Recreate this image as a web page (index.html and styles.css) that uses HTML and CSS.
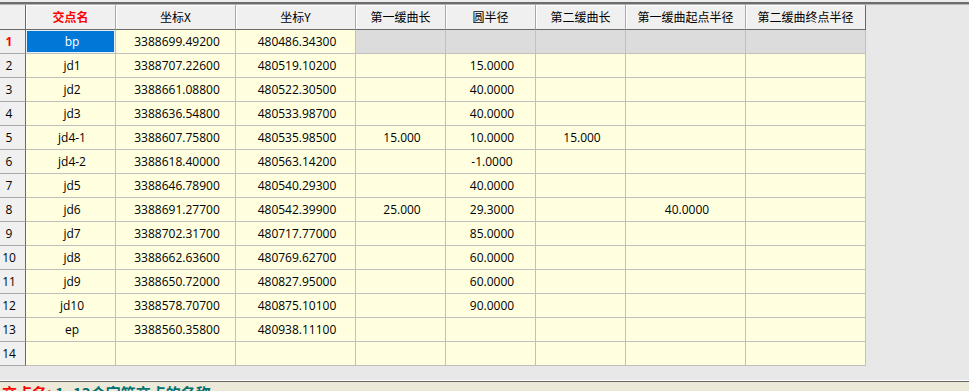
FILE: index.html
```html
<!DOCTYPE html>
<html lang="zh-CN">
<head>
<meta charset="utf-8">
<title>交点表</title>
<link rel="stylesheet" href="styles.css">
</head>
<body>
<div class="topbar"></div>
<div class="area">
  <div class="grid">
    <div class="row head">
      <div class="corner"></div>
      <div class="hc key">交点名</div>
      <div class="hc">坐标X</div>
      <div class="hc">坐标Y</div>
      <div class="hc">第一缓曲长</div>
      <div class="hc">圆半径</div>
      <div class="hc">第二缓曲长</div>
      <div class="hc">第一缓曲起点半径</div>
      <div class="hc last">第二缓曲终点半径</div>
    </div>
    <div class="row">
      <div class="rh cur">1</div>
      <div class="c sel">bp</div>
      <div class="c">3388699.49200</div>
      <div class="c">480486.34300</div>
      <div class="c ro"></div><div class="c ro"></div><div class="c ro"></div><div class="c ro"></div><div class="c ro"></div>
    </div>
    <div class="row">
      <div class="rh">2</div><div class="c">jd1</div><div class="c">3388707.22600</div><div class="c">480519.10200</div>
      <div class="c"></div><div class="c">15.0000</div><div class="c"></div><div class="c"></div><div class="c"></div>
    </div>
    <div class="row">
      <div class="rh">3</div><div class="c">jd2</div><div class="c">3388661.08800</div><div class="c">480522.30500</div>
      <div class="c"></div><div class="c">40.0000</div><div class="c"></div><div class="c"></div><div class="c"></div>
    </div>
    <div class="row">
      <div class="rh">4</div><div class="c">jd3</div><div class="c">3388636.54800</div><div class="c">480533.98700</div>
      <div class="c"></div><div class="c">40.0000</div><div class="c"></div><div class="c"></div><div class="c"></div>
    </div>
    <div class="row">
      <div class="rh">5</div><div class="c">jd4-1</div><div class="c">3388607.75800</div><div class="c">480535.98500</div>
      <div class="c">15.000</div><div class="c">10.0000</div><div class="c">15.000</div><div class="c"></div><div class="c"></div>
    </div>
    <div class="row">
      <div class="rh">6</div><div class="c">jd4-2</div><div class="c">3388618.40000</div><div class="c">480563.14200</div>
      <div class="c"></div><div class="c">-1.0000</div><div class="c"></div><div class="c"></div><div class="c"></div>
    </div>
    <div class="row">
      <div class="rh">7</div><div class="c">jd5</div><div class="c">3388646.78900</div><div class="c">480540.29300</div>
      <div class="c"></div><div class="c">40.0000</div><div class="c"></div><div class="c"></div><div class="c"></div>
    </div>
    <div class="row">
      <div class="rh">8</div><div class="c">jd6</div><div class="c">3388691.27700</div><div class="c">480542.39900</div>
      <div class="c">25.000</div><div class="c">29.3000</div><div class="c"></div><div class="c">40.0000</div><div class="c"></div>
    </div>
    <div class="row">
      <div class="rh">9</div><div class="c">jd7</div><div class="c">3388702.31700</div><div class="c">480717.77000</div>
      <div class="c"></div><div class="c">85.0000</div><div class="c"></div><div class="c"></div><div class="c"></div>
    </div>
    <div class="row">
      <div class="rh">10</div><div class="c">jd8</div><div class="c">3388662.63600</div><div class="c">480769.62700</div>
      <div class="c"></div><div class="c">60.0000</div><div class="c"></div><div class="c"></div><div class="c"></div>
    </div>
    <div class="row">
      <div class="rh">11</div><div class="c">jd9</div><div class="c">3388650.72000</div><div class="c">480827.95000</div>
      <div class="c"></div><div class="c">60.0000</div><div class="c"></div><div class="c"></div><div class="c"></div>
    </div>
    <div class="row">
      <div class="rh">12</div><div class="c">jd10</div><div class="c">3388578.70700</div><div class="c">480875.10100</div>
      <div class="c"></div><div class="c">90.0000</div><div class="c"></div><div class="c"></div><div class="c"></div>
    </div>
    <div class="row">
      <div class="rh">13</div><div class="c">ep</div><div class="c">3388560.35800</div><div class="c">480938.11100</div>
      <div class="c"></div><div class="c"></div><div class="c"></div><div class="c"></div><div class="c"></div>
    </div>
    <div class="row">
      <div class="rh">14</div><div class="c"></div><div class="c"></div><div class="c"></div>
      <div class="c"></div><div class="c"></div><div class="c"></div><div class="c"></div><div class="c"></div>
    </div>
  </div>
</div>
<div class="status">
  <span class="label">交点名:</span> <span class="desc">1~13个字符交点的名称</span>
</div>
</body>
</html>
```
FILE: styles.css
```css
html, body {
  margin: 0;
  padding: 0;
}
body {
  width: 969px;
  height: 391px;
  overflow: hidden;
  background: #e6e6e6;
  font-family: "Open Sans", "Noto Sans CJK SC", sans-serif;
  font-size: 12px;
  color: #000;
}
.topbar {
  height: 2px;
  background: #ececec;
  border-bottom: 2px solid #6d6d6d;
  box-shadow: 0 1px 0 #b4b4b4;
  margin-bottom: 1px;
}
.area {
  height: 375px;
  background: #e8e8e8;
  border-bottom: 1px solid #ffffff;
}
.grid {
  width: 866px;
}
.row {
  display: grid;
  grid-template-columns: 26px 90px 120px 120px 90px 90px 90px 120px 120px;
  height: 24px;
}
.row.head {
  height: 25px;
}
.corner {
  background: #f0f0f0;
  border-right: 1px solid #6a6a6a;
  border-bottom: 1px solid #6a6a6a;
}
.hc {
  background: #f0f0f0;
  border-right: 1px solid #a8a8a8;
  border-bottom: 1px solid #6a6a6a;
  box-shadow: inset 1px 1px 0 #ffffff;
  display: flex;
  align-items: center;
  justify-content: center;
  font-family: "Noto Sans CJK SC", sans-serif;
  line-height: 1;
  padding-bottom: 1px;
}
.hc.key {
  color: #ff0000;
  font-weight: bold;
}
.hc.last {
  border-right-color: #6a6a6a;
}
.rh {
  background: #f0f0f0;
  border-right: 1px solid #6a6a6a;
  border-bottom: 1px solid #a8a8a8;
  display: flex;
  align-items: center;
  justify-content: center;
  padding-right: 7px;
  padding-bottom: 1px;
}
.rh.cur {
  color: #ff0000;
  font-weight: bold;
}
.c {
  background: #ffffe0;
  border-right: 1px solid #c0c0c0;
  border-bottom: 1px solid #c0c0c0;
  display: flex;
  align-items: center;
  justify-content: center;
  padding-left: 3px;
  padding-bottom: 1px;
  white-space: nowrap;
}
.c.ro {
  background: #dcdcdc;
}
.c.sel {
  background: #0078d7;
  color: #ffffff;
  box-shadow: inset 0 0 0 1px #e8f0f8;
}
.status {
  border-top: 1px solid #646464;
  background: #ece9d8;
  height: 20px;
  padding-left: 2px;
  padding-top: 1px;
  font-family: "Noto Sans CJK SC", sans-serif;
  font-size: 15px;
  font-weight: bold;
  line-height: 20px;
  white-space: nowrap;
}
.label {
  color: #ff0000;
}
.desc {
  color: #007070;
}
```
